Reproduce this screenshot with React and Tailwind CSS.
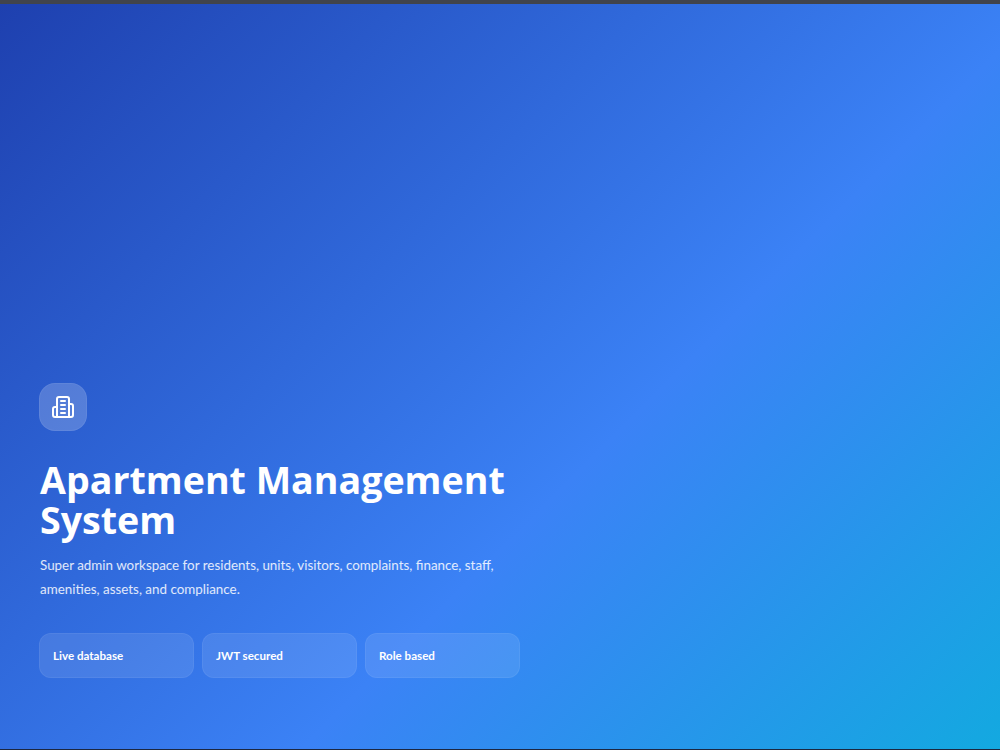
const badges = ["Live database", "JWT secured", "Role based"];

function BuildingIcon() {
  return (
    <svg width="24" height="24" viewBox="0 0 24 24" fill="none" stroke="currentColor" strokeWidth="2" strokeLinecap="round" strokeLinejoin="round" className="text-white">
      <path d="M6 22V4a2 2 0 0 1 2-2h8a2 2 0 0 1 2 2v18Z" />
      <path d="M6 12H4a2 2 0 0 0-2 2v6a2 2 0 0 0 2 2h2" />
      <path d="M18 9h2a2 2 0 0 1 2 2v9a2 2 0 0 1-2 2h-2" />
      <path d="M10 6h4" />
      <path d="M10 10h4" />
      <path d="M10 14h4" />
      <path d="M10 18h4" />
    </svg>
  );
}

export default function App() {
  return (
    <div className="flex h-[750px] w-full flex-col overflow-hidden bg-[#3a3d44] font-['Lato','Open_Sans',sans-serif]">
      <div className="h-1 shrink-0 bg-[#41444c]" />
      <main className="flex flex-1 flex-col justify-end bg-[linear-gradient(135deg,#1e40af_0%,#3b82f6_60%,#13a9e0_100%)] pb-[71px] pl-[39px]">
        <div className="w-[481px]">
          {/* Logo */}
          <div className="flex h-12 w-12 items-center justify-center rounded-2xl border border-white/[0.06] bg-white/20">
            <BuildingIcon />
          </div>

          <h1 className="mt-[29px] pl-px font-['Open_Sans',sans-serif] text-[37.6px] font-bold leading-[40px] text-white">Apartment Management System</h1>
          <p className="mt-[13px] pl-px text-[13.4px] leading-6 text-white/85">
            Super admin workspace for residents, units, visitors, complaints, finance, staff, amenities, assets, and compliance.
          </p>

          {/* Badges */}
          <div className="mt-8 grid grid-cols-3 gap-2">
            {badges.map((b) => (
              <div key={b} className="flex h-[45px] items-center rounded-xl border border-white/[0.06] bg-white/10 px-[13px] text-[11.6px] font-bold text-white">
                {b}
              </div>
            ))}
          </div>
        </div>
      </main>
      <div className="h-px shrink-0 bg-[#1c2740]" />
    </div>
  );
}
